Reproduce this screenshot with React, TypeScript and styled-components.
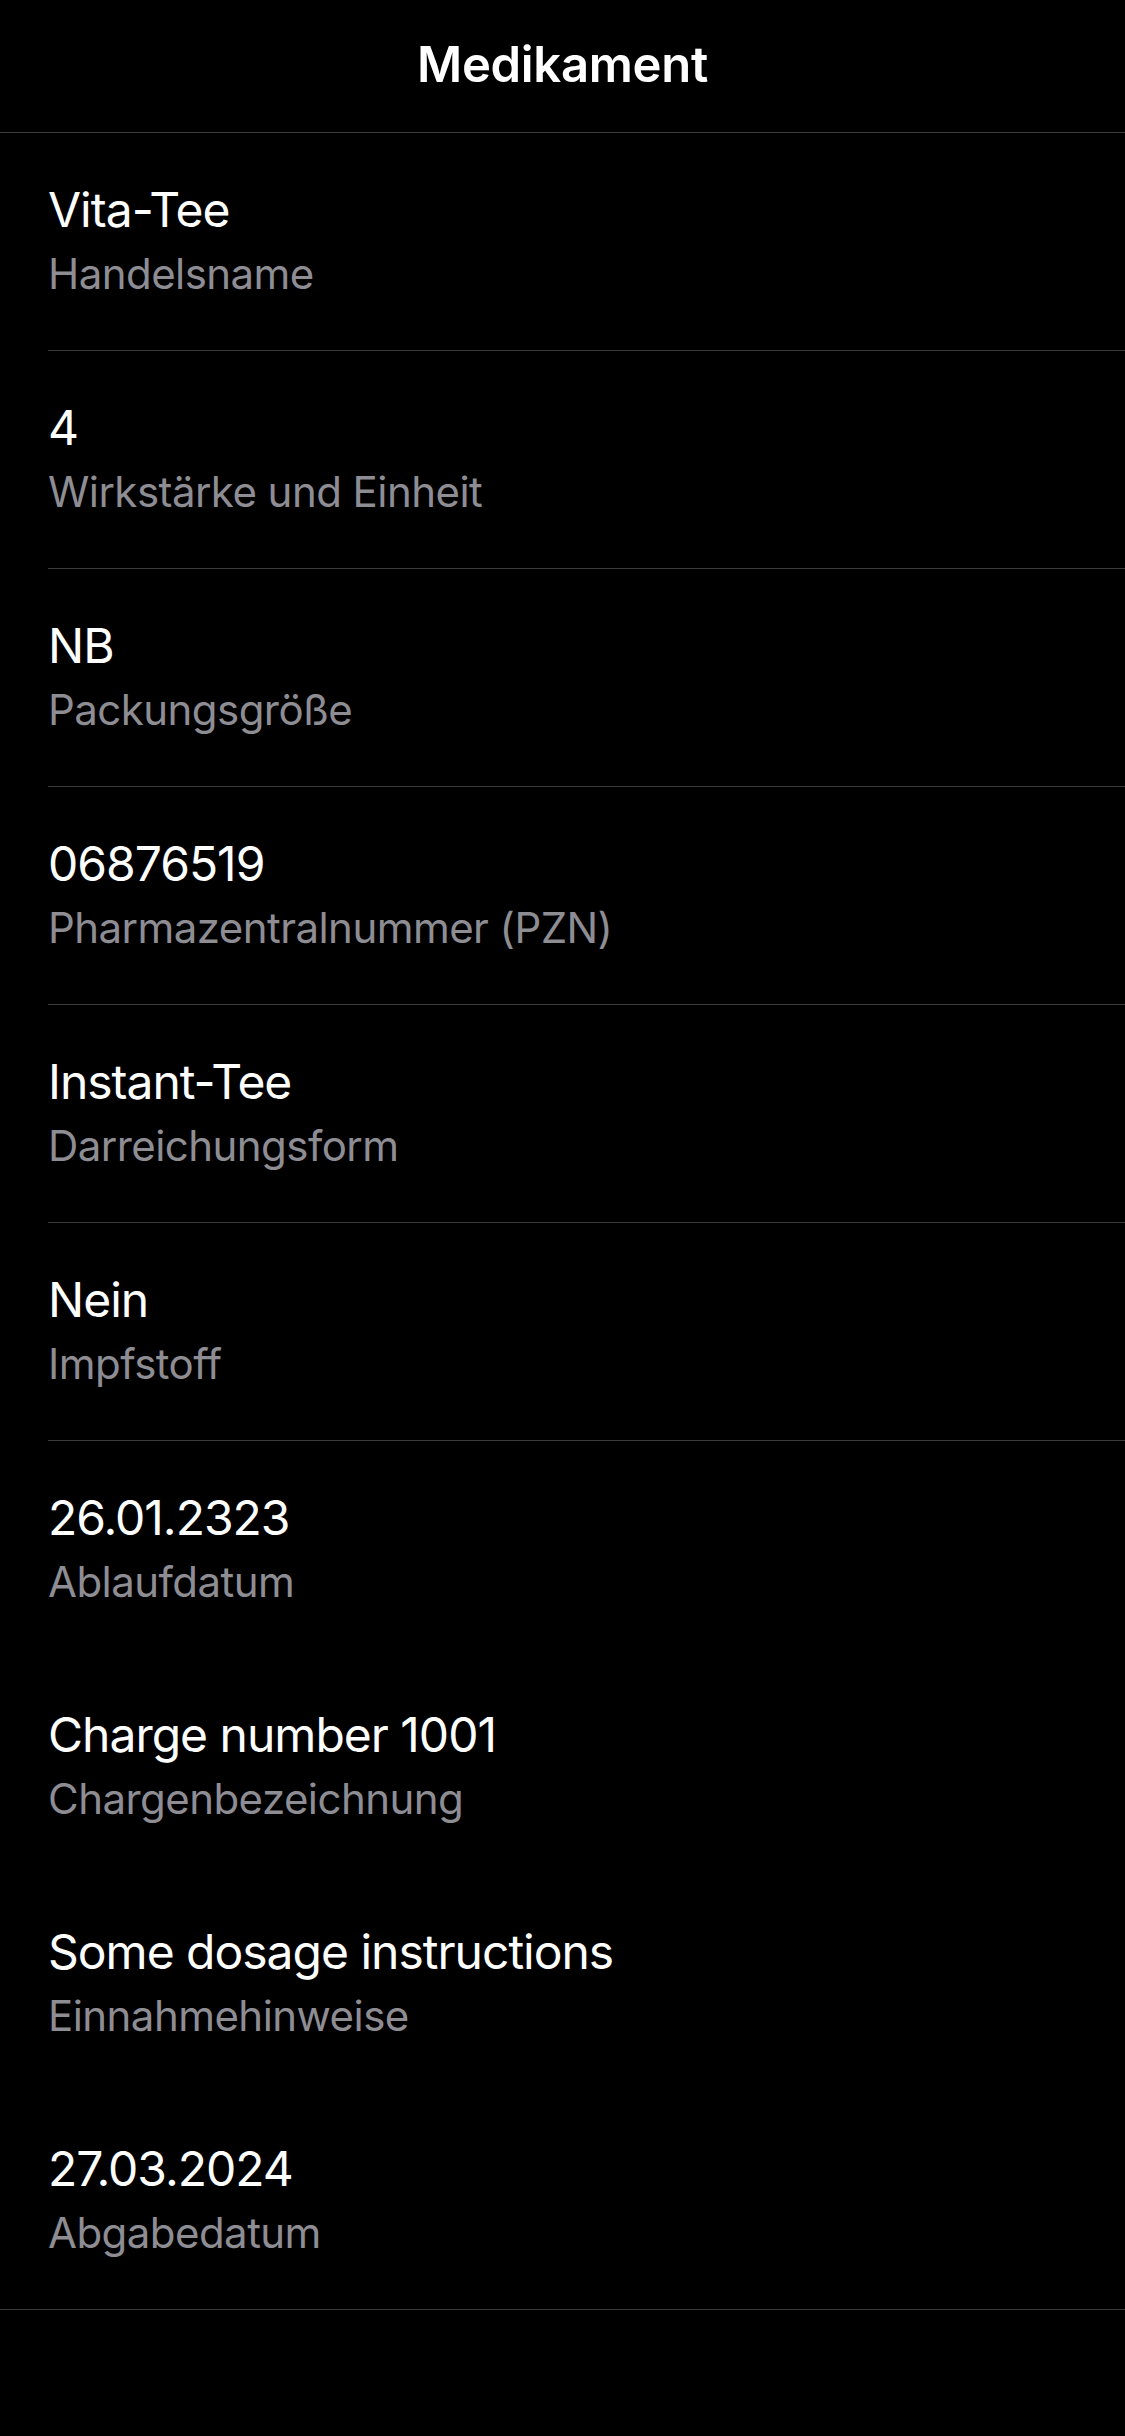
import React from "react";
import styled, { createGlobalStyle } from "styled-components";

interface Field {
  value: string;
  label: string;
  divider: boolean;
}

const fields: Field[] = [
  { value: "Vita-Tee", label: "Handelsname", divider: true },
  { value: "4", label: "Wirkstärke und Einheit", divider: true },
  { value: "NB", label: "Packungsgröße", divider: true },
  { value: "06876519", label: "Pharmazentralnummer (PZN)", divider: true },
  { value: "Instant-Tee", label: "Darreichungsform", divider: true },
  { value: "Nein", label: "Impfstoff", divider: true },
  { value: "26.01.2323", label: "Ablaufdatum", divider: false },
  { value: "Charge number 1001", label: "Chargenbezeichnung", divider: false },
  { value: "Some dosage instructions", label: "Einnahmehinweise", divider: false },
  { value: "27.03.2024", label: "Abgabedatum", divider: false }
];

const FieldRow = ({ value, label, divider }: Field) => {
  return (
    <Row>
      <RowInner $divider={divider}>
        <Value>{value}</Value>
        <Label>{label}</Label>
      </RowInner>
    </Row>
  );
};

const App = () => {
  return (
    <>
      <GlobalStyle />
      <Screen>
        <Header>
          <Title>Medikament</Title>
        </Header>
        <List>
          {fields.map((f) => (
            <FieldRow key={f.label} {...f} />
          ))}
        </List>
      </Screen>
    </>
  );
};

export default App;

const GlobalStyle = createGlobalStyle`
  html, body {
    margin: 0;
    padding: 0;
    background: #000;
  }
  * {
    box-sizing: border-box;
  }
`;

const Screen = styled.div`
  width: 1125px;
  min-height: 2436px;
  background: #000;
  font-family: Inter, "Noto Sans", sans-serif;
  color: #fff;
`;

const Header = styled.div`
  height: 133px;
  display: flex;
  align-items: center;
  justify-content: center;
  border-bottom: 1px solid #3a3a3c;
`;

const Title = styled.div`
  font-size: 49px;
  font-weight: 600;
  letter-spacing: -0.3px;
  margin-top: -4px;
`;

const List = styled.div`
  display: flex;
  flex-direction: column;
  border-bottom: 1px solid #3a3a3c;
`;

const Row = styled.div`
  padding-left: 48px;
`;

const RowInner = styled.div<{ $divider: boolean }>`
  height: ${({ $divider }) => ($divider ? "218px" : "217px")};
  padding-top: 48px;
  display: flex;
  flex-direction: column;
  border-bottom: ${({ $divider }) => ($divider ? "1px solid #3a3a3c" : "none")};
`;

const Value = styled.div`
  font-size: 48px;
  line-height: 58px;
  font-weight: 400;
  letter-spacing: -1px;
  color: #fff;
`;

const Label = styled.div`
  margin-top: 10px;
  font-size: 42px;
  line-height: 50px;
  font-weight: 400;
  letter-spacing: -0.55px;
  color: #8d8d93;
`;
